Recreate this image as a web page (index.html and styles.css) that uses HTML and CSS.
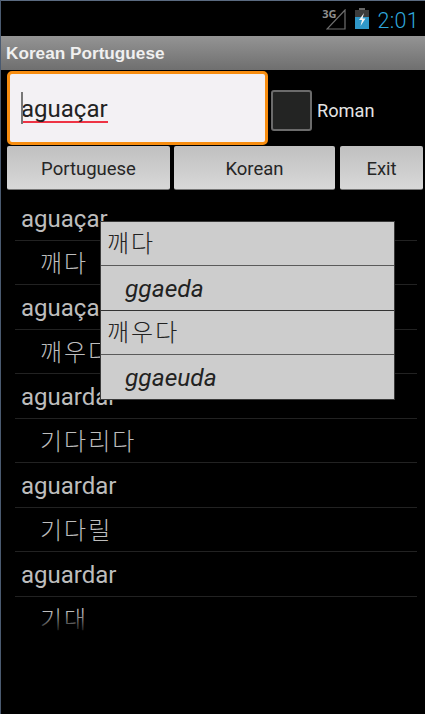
FILE: index.html
```html
<!DOCTYPE html>
<html lang="pt">
<head>
<meta charset="utf-8">
<title>Korean Portuguese</title>
<link rel="stylesheet" href="styles.css">
</head>
<body>
<div class="screen">
  <header class="status">
    <span class="net">3G</span>
    <svg class="signal" width="20" height="21" viewBox="0 0 20 21"><path d="M19 1V20H1Z" fill="none" stroke="#6f6f6f" stroke-width="1.2"/></svg>
    <svg class="battery" width="14" height="21" viewBox="0 0 14 21"><rect x="4" y="0" width="6" height="2.5" fill="#666"/><rect x="0" y="2" width="14" height="19" fill="#3c3c3c"/><rect x="0" y="9" width="14" height="12" fill="#2f97c8"/><path d="M9 5 4 12H7L5.5 18 10.5 10.5H7.5Z" fill="#f2f2f2"/></svg>
    <span class="clock">2:01</span>
  </header>
  <div class="titlebar">Korean Portuguese</div>
  <div class="search">
    <div class="field"><span class="caret"></span><span class="word">aguaçar</span></div>
    <span class="check"></span>
    <span class="roman">Roman</span>
  </div>
  <div class="buttons">
    <button class="btn btn-pt">Portuguese</button>
    <button class="btn btn-ko">Korean</button>
    <button class="btn btn-ex">Exit</button>
  </div>
  <div class="list">
    <div class="row">aguaçar</div>
    <div class="row sub">깨다</div>
    <div class="row">aguaçar</div>
    <div class="row sub">깨우다</div>
    <div class="row">aguardar</div>
    <div class="row sub">기다리다</div>
    <div class="row">aguardar</div>
    <div class="row sub">기다릴</div>
    <div class="row">aguardar</div>
    <div class="row sub">기대</div>
  </div>
  <div class="popup">
    <div class="pop-row ko">깨다</div>
    <div class="pop-row rom">ggaeda</div>
    <div class="pop-row ko">깨우다</div>
    <div class="pop-row rom">ggaeuda</div>
  </div>
</div>
</body>
</html>
```
FILE: styles.css
```css
* { box-sizing: border-box; }
html, body { margin: 0; padding: 0; background: #000; }
.screen {
  position: relative;
  width: 425px;
  height: 714px;
  overflow: hidden;
  background: #000;
  border-left: 1px solid #4a5a70;
  font-family: Roboto, "Noto Sans CJK KR", sans-serif;
  display: flex;
  flex-direction: column;
}
.status {
  height: 36px;
  flex: none;
  display: flex;
  align-items: flex-start;
  justify-content: flex-end;
  padding: 7px 6px 0 0;
  border-top: 1px solid #5a6a80;
}
.net {
  font-size: 11px;
  font-weight: 700;
  line-height: 11px;
  color: #8f8f8f;
  margin: 0 -11px 0 0;
  font-family: "Noto Sans", sans-serif;
}
.signal { margin-right: 9px; margin-top: 1px; }
.battery { margin-right: 9px; }
.clock { color: #2ea7dc; font-size: 21.5px; line-height: 26px; letter-spacing: .3px; font-weight: 300; }
.titlebar {
  height: 34px;
  flex: none;
  background: linear-gradient(#949494, #6f6f6f);
  color: #f0f0f0;
  font-size: 17.2px;
  font-weight: 700;
  line-height: 35px;
  padding-left: 5px;
  font-family: "Liberation Sans", sans-serif;
}
.search {
  height: 76px;
  flex: none;
  display: flex;
  align-items: center;
  padding-left: 6px;
}
.field {
  width: 261px;
  height: 74px;
  border: 3px solid #f78d10;
  border-radius: 5px;
  background: #f3f1f4;
  display: flex;
  align-items: center;
  padding-left: 11px;
  position: relative;
}
.caret { position: absolute; left: 11px; top: 18px; width: 2px; height: 32px; background: #777; }
.word {
  font-size: 24px;
  color: #222;
  line-height: 27px;
  height: 27px;
  border-bottom: 2px solid #ee3344;
  margin-top: 2px;
}
.check {
  width: 41px;
  height: 41px;
  margin: 4px 0 0 3px;
  background: #232423;
  border: 2px solid #6b6b6b;
  border-radius: 3px;
}
.roman { color: #e4e4e4; font-size: 18.2px; margin: 5px 0 0 5px; }
.buttons {
  display: flex;
  flex: none;
  height: 44px;
  gap: 4px;
  padding-left: 6px;
}
.btn {
  height: 44px;
  padding: 2px 0 0;
  border: 0;
  border-radius: 2px;
  background: linear-gradient(#c0c0c0, #d8d8d8);
  border-bottom: 1px solid #777;
  color: #262626;
  font-family: Roboto, sans-serif;
  font-size: 18.5px;
}
.btn-pt { width: 163px; }
.btn-ko { width: 161px; }
.btn-ex { width: 83px; margin-left: 1px; }
.list {
  position: relative;
  flex: none;
  height: 438px;
  margin-top: 6px;
  overflow: hidden;
  padding-left: 14px;
  width: 416px;
}
.list::after {
  content: "";
  position: absolute;
  left: 0;
  right: 0;
  bottom: 0;
  height: 22px;
  background: linear-gradient(rgba(0,0,0,0), #000);
}
.row {
  height: 44.5px;
  line-height: 47px;
  font-size: 24px;
  color: #bdbdbd;
  padding-left: 6px;
  border-bottom: 1px solid #222;
}
.row.sub { padding-left: 25px; font-weight: 300; line-height: 46px; letter-spacing: 2px; }
.popup {
  position: absolute;
  left: 99px;
  top: 221px;
  width: 295px;
  background: #cdcdcd;
  border: 1px solid #3a3a3a;
}
.pop-row {
  height: 44.3px;
  color: #222;
  font-size: 24.5px;
  line-height: 45px;
  border-bottom: 1px solid #5a5a5a;
}
.pop-row:last-child { border-bottom: 0; }
.pop-row.ko { padding-left: 6px; font-size: 24px; font-weight: 300; line-height: 44px; letter-spacing: 2px; }
.pop-row.rom { padding-left: 24px; font-style: italic; border-bottom-color: #333; }
```
